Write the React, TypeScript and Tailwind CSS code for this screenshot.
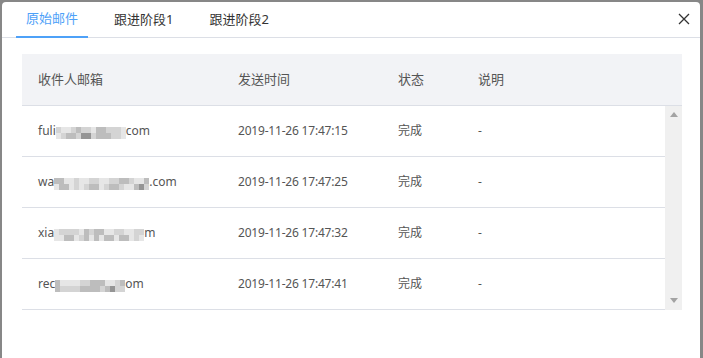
const shade: Record<string, string> = {
  "0": "bg-[#f6f6f6]",
  "1": "bg-[#e6e6e6]",
  "2": "bg-[#d4d4d4]",
  "3": "bg-[#bdbdbd]",
  "4": "bg-[#959595]",
};

function Mosaic({ top, bottom }: { top: string; bottom: string }) {
  return (
    <span className="inline-flex flex-col align-middle mt-[4px]">
      <span className="flex">
        {top.split("").map((c, i) => (
          <span key={i} className={`w-[5px] h-[6px] ${shade[c]}`} />
        ))}
      </span>
      <span className="flex">
        {bottom.split("").map((c, i) => (
          <span key={i} className={`w-[5px] h-[6px] ${shade[c]}`} />
        ))}
      </span>
    </span>
  );
}

const rows = [
  { pre: "fuli", top: "21123221332221", bottom: "12332442333221", post: "com", time: "2019-11-26 17:47:15" },
  { pre: "wa", top: "3311211221122332113", bottom: "1331212331233211342", post: ".com", time: "2019-11-26 17:47:25" },
  { pre: "xia", top: "122221323311221122", bottom: "113312313133133121", post: "m", time: "2019-11-26 17:47:32" },
  { pre: "rec", top: "31111223331123", bottom: "32222333323422", post: "om", time: "2019-11-26 17:47:41" },
];

function Arrow({ up }: { up?: boolean }) {
  return (
    <svg width="8" height="5" viewBox="0 0 8 5">
      <path d={up ? "M0 5 L4 0 L8 5 Z" : "M0 0 L4 5 L8 0 Z"} fill="#a3a3a3" />
    </svg>
  );
}

export default function App() {
  return (
    <div
      className="w-[703px] h-[358px] overflow-hidden bg-[#878787] pt-[2px] pl-[2px] pr-[3px]"
      style={{ fontFamily: '"Noto Sans", "Noto Sans CJK SC", sans-serif' }}
    >
      <div className="bg-white rounded-t-[4px] h-[400px]">
        <div className="h-[36px] border-b border-[#dcdfe6] flex items-stretch justify-between pl-[14px] pr-[9px]">
          <div className="flex gap-[16px]">
            <div className="px-[10px] flex items-center text-[13px] text-[#4ea1f8] border-b-2 border-[#4ea1f8] mb-[-1px]">
              原始邮件
            </div>
            <div className="px-[10px] flex items-center text-[13px] text-[#333]">跟进阶段1</div>
            <div className="px-[10px] flex items-center text-[13px] text-[#333]">跟进阶段2</div>
          </div>
          <div className="flex items-center pb-[1px]">
            <svg width="14" height="14" viewBox="0 0 14 14">
              <path d="M2 2 L12 12 M12 2 L2 12" stroke="#333" strokeWidth="1.3" />
            </svg>
          </div>
        </div>

        <div className="pt-[16px] pl-[20px] pr-[18px]">
          <div className="h-[52px] bg-[#f2f3f6] border-b border-[#dcdfe6] flex items-center text-[13px] text-[#555]">
            <div className="w-[200px] pl-[16px]">收件人邮箱</div>
            <div className="w-[160px] pl-[16px]">发送时间</div>
            <div className="w-[80px] pl-[16px]">状态</div>
            <div className="pl-[16px]">说明</div>
          </div>
          <div className="flex">
            <div className="flex-1">
              {rows.map((r) => (
                <div
                  key={r.time}
                  className="h-[51px] border-b border-[#dcdfe6] flex items-center text-[12px] text-[#555]"
                >
                  <div className="w-[200px] pl-[16px] flex items-center whitespace-nowrap">
                    <span>{r.pre}</span>
                    <Mosaic top={r.top} bottom={r.bottom} />
                    <span>{r.post}</span>
                  </div>
                  <div className="w-[160px] pl-[16px] tracking-[-0.2px]">{r.time}</div>
                  <div className="w-[80px] pl-[16px]">完成</div>
                  <div className="pl-[16px]">-</div>
                </div>
              ))}
            </div>
            <div className="w-[17px] bg-[#f0f0f0] flex flex-col items-center justify-between pt-[6px] pb-[7px]">
              <Arrow up />
              <Arrow />
            </div>
          </div>
        </div>
      </div>
    </div>
  );
}
